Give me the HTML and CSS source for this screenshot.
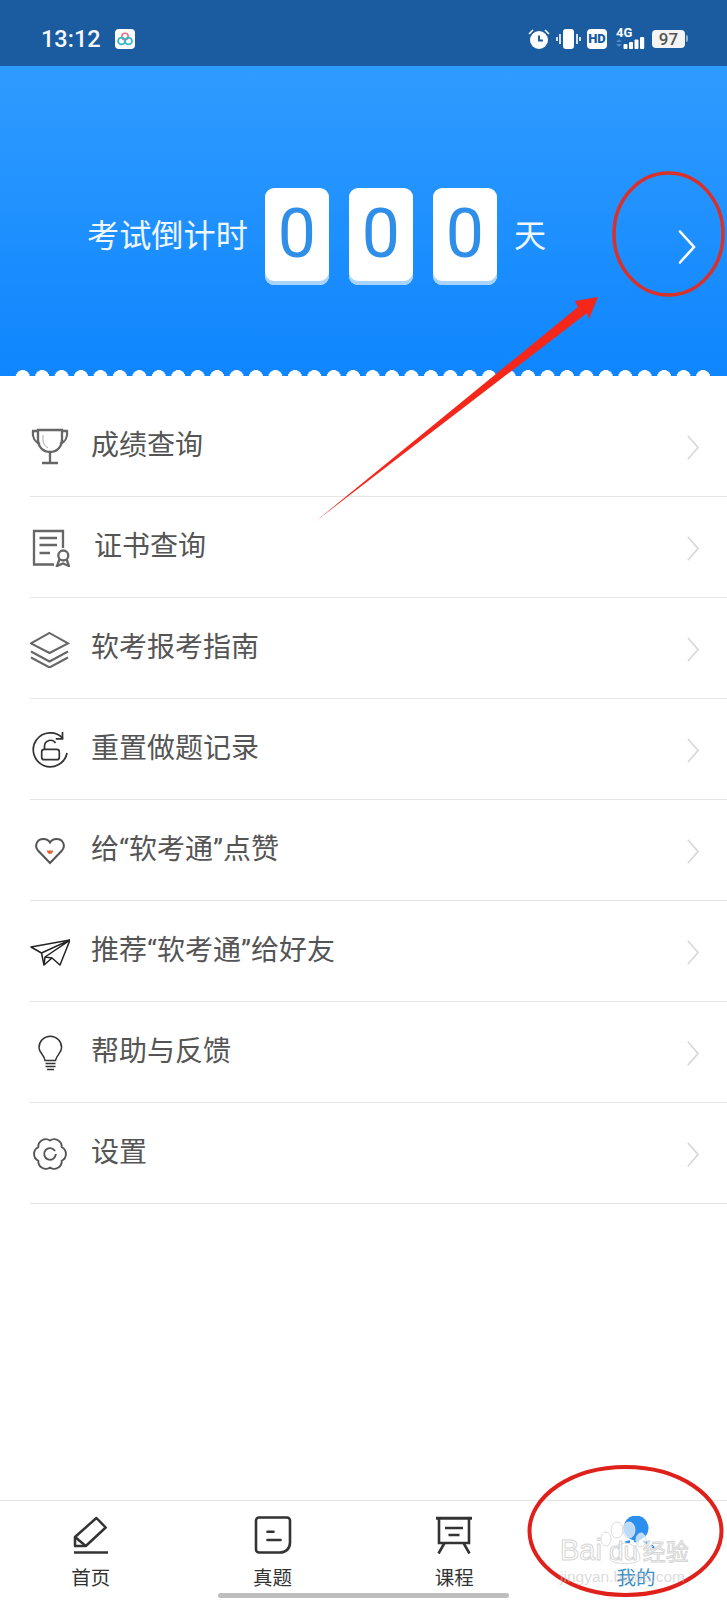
FILE: index.html
```html
<!DOCTYPE html>
<html lang="zh-CN">
<head>
<meta charset="utf-8">
<title>软考通</title>
<link rel="stylesheet" href="styles.css">
</head>
<body>
<div class="app">
  <header class="status">
    <span class="time">13:12</span>
    <svg class="app-badge" viewBox="0 0 20 20"><rect width="20" height="20" rx="4" fill="#fff"/><circle cx="10" cy="7.500" r="3.200" fill="none" stroke="#e8708a" stroke-width="1.600"/><circle cx="6.500" cy="12" r="3.400" fill="none" stroke="#35b6c8" stroke-width="1.800"/><circle cx="13.500" cy="12" r="3.400" fill="none" stroke="#35b6c8" stroke-width="1.800"/></svg>
    <div class="status-right">
      <svg class="ic-alarm" viewBox="0 0 22 20"><circle cx="11" cy="11" r="9" fill="#fff"/><path d="M11 6.500V11.500H15" fill="none" stroke="#1a5c9f" stroke-width="2"/><path d="M1 5 5 1M21 5 17 1" stroke="#fff" stroke-width="1.600" fill="none"/></svg>
      <svg class="ic-vib" viewBox="0 0 25 20"><rect x="7" y="0" width="11" height="20" rx="3" fill="#fff"/><path d="M4 5v10M1 8v4M21 5v10M24 8v4" stroke="#fff" stroke-width="1.600"/></svg>
      <span class="hd">HD</span>
      <div class="net">
        <span class="net-label">4G</span>
        <svg class="net-bars" viewBox="0 0 30 12"><path d="M0 5 3 2 6 5zM0 7 3 10 6 7z" fill="#4f86c4"/><rect x="7.500" y="7" width="4" height="5" rx="1" fill="#fff"/><rect x="13" y="5" width="4" height="7" rx="1" fill="#fff"/><rect x="18.500" y="2.500" width="4" height="9.500" rx="1" fill="#fff"/><rect x="24" y="0" width="4.200" height="12" rx="1" fill="#fff"/></svg>
      </div>
      <div class="battery"><span class="battery-body">97</span><span class="battery-nub"></span></div>
    </div>
  </header>

  <section class="hero">
    <div class="hero-row">
      <span class="hero-text">考试倒计时</span>
      <span class="digit">0</span>
      <span class="digit">0</span>
      <span class="digit">0</span>
      <span class="hero-text day">天</span>
      <svg class="hero-chevron" viewBox="0 0 18 34"><path d="M2 1.500 16 17 2 32.500" fill="none" stroke="#fff" stroke-width="2.600" stroke-linecap="round"/></svg>
    </div>
    <div class="scallops"></div>
  </section>

  <main class="list">
    <a class="row">
      <svg class="row-icon" viewBox="0 0 40 40"><g fill="none" stroke="#666" stroke-width="2.300"><path d="M8 4h24v9c0 8-5 13-12 13S8 21 8 13z"/><path d="M8 5H3c-1 6 2 11 7 13M32 5h5c1 6-2 11-7 13M20 26v11M12 37h16"/><path d="M13 9v5c0 4 2 6 5 8" stroke="#aaa" stroke-width="1"/></g></svg>
      <span class="row-label">成绩查询</span>
      <svg class="row-chevron" viewBox="0 0 12 25"><path d="M.8 .8 11 12.500.8 24.200" fill="none" stroke="#d8d8d8" stroke-width="1.700"/></svg>
    </a>
    <a class="row">
      <svg class="row-icon" viewBox="0 0 40 40"><g fill="none" stroke="#666" stroke-width="2.300"><path d="M33 21V4H4v33.500h20"/><path d="M9.500 11H27M9.500 18H27M9.500 26H20"/><circle cx="33.300" cy="28.500" r="5"/><path d="M29.500 32 27 39l6-2.500 6 2.500-2.500-7"/></g></svg>
      <span class="row-label row-label-shift">证书查询</span>
      <svg class="row-chevron" viewBox="0 0 12 25"><path d="M.8 .8 11 12.500.8 24.200" fill="none" stroke="#d8d8d8" stroke-width="1.700"/></svg>
    </a>
    <a class="row">
      <svg class="row-icon" viewBox="0 0 40 40"><g fill="none" stroke="#666" stroke-width="2"><path d="M19.500 5 38 15.300 19.500 25 1 15.300z"/><path d="M1 23.500l18.500 10 18.500-10M1 29.500l18.500 10 18.500-10"/></g></svg>
      <span class="row-label">软考报考指南</span>
      <svg class="row-chevron" viewBox="0 0 12 25"><path d="M.8 .8 11 12.500.8 24.200" fill="none" stroke="#d8d8d8" stroke-width="1.700"/></svg>
    </a>
    <a class="row">
      <svg class="row-icon" viewBox="0 0 40 40"><g fill="none" stroke="#333" stroke-width="1.700"><path d="M33 9.500A17 17 0 1 0 37 24"/><path d="M32.500 3v6.800h-6.800"/><rect x="11.700" y="20.300" width="17.600" height="10.400" rx="2.500"/><path d="M14.500 20v-3a6 6 0 0 1 11-3"/></g></svg>
      <span class="row-label">重置做题记录</span>
      <svg class="row-chevron" viewBox="0 0 12 25"><path d="M.8 .8 11 12.500.8 24.200" fill="none" stroke="#d8d8d8" stroke-width="1.700"/></svg>
    </a>
    <a class="row">
      <svg class="row-icon" viewBox="0 0 40 40"><path d="M20 33 8 20.500C4 15.500 7 9 13.500 9c3 0 5 1 6.500 3.500C21.500 10 23.500 9 26.500 9 33 9 36 15.500 32 20.500z" fill="none" stroke="#555" stroke-width="2"/><path d="M16.700 20.500h6.600c-.5 2.500-2 3.500-3.300 3.500s-2.800-1-3.300-3.500z" fill="#e8622a"/></svg>
      <span class="row-label">给“软考通”点赞</span>
      <svg class="row-chevron" viewBox="0 0 12 25"><path d="M.8 .8 11 12.500.8 24.200" fill="none" stroke="#d8d8d8" stroke-width="1.700"/></svg>
    </a>
    <a class="row">
      <svg class="row-icon" viewBox="0 0 40 40"><g fill="none" stroke="#222" stroke-width="1.500" stroke-linejoin="round"><path d="M40 9 1 16l10.500 6L14 34l8-7 8 7z"/><path d="M40 9 11.500 22M40 9 15 26l-1 8M15 26l7 1"/></g></svg>
      <span class="row-label">推荐“软考通”给好友</span>
      <svg class="row-chevron" viewBox="0 0 12 25"><path d="M.8 .8 11 12.500.8 24.200" fill="none" stroke="#d8d8d8" stroke-width="1.700"/></svg>
    </a>
    <a class="row">
      <svg class="row-icon" viewBox="0 0 40 40"><g fill="none" stroke="#333" stroke-width="1.500"><path d="M15 28.500C14 22 9 21 9 15.500a11.300 11.300 0 0 1 22.600 0C31.600 21 27 22 25.500 28.500z"/><path d="M15.500 31.500h10M15.500 34.500h10M17 37.500h7"/></g></svg>
      <span class="row-label">帮助与反馈</span>
      <svg class="row-chevron" viewBox="0 0 12 25"><path d="M.8 .8 11 12.500.8 24.200" fill="none" stroke="#d8d8d8" stroke-width="1.700"/></svg>
    </a>
    <a class="row">
      <svg class="row-icon" viewBox="0 0 40 40"><g fill="none" stroke="#555" stroke-width="1.900" stroke-linejoin="round"><path d="M20 7.500A7.500 7.500 0 0 1 31.700 14.250A7.500 7.500 0 0 1 31.700 27.750A7.500 7.500 0 0 1 20 34.500A7.500 7.500 0 0 1 8.300 27.750A7.500 7.500 0 0 1 8.300 14.250A7.500 7.500 0 0 1 20 7.500Z"/><path d="M25 18a5.800 5.800 0 1 0 .8 3"/></g></svg>
      <span class="row-label">设置</span>
      <svg class="row-chevron" viewBox="0 0 12 25"><path d="M.8 .8 11 12.500.8 24.200" fill="none" stroke="#d8d8d8" stroke-width="1.700"/></svg>
    </a>
  </main>

  <nav class="tabs">
    <a class="tab">
      <svg class="tab-icon" viewBox="0 0 40 40"><g fill="none" stroke="#333" stroke-width="2.500" stroke-linejoin="round"><path d="M4 21 25.400 2l9.300 9.500L14.800 30H4z"/><path d="M4 21l10.800 9"/><path d="M3 36.500h34"/></g></svg>
      <span class="tab-label">首页</span>
    </a>
    <a class="tab">
      <svg class="tab-icon" viewBox="0 0 40 40"><g fill="none" stroke="#333" stroke-width="2.600" stroke-linecap="round"><path d="M6 1.500h28a3 3 0 0 1 3 3v22c0 6-4 10-10 10H6a3 3 0 0 1-3-3v-29a3 3 0 0 1 3-3z"/><path d="M14.500 15.700h6M14.500 24h13"/></g></svg>
      <span class="tab-label">真题</span>
    </a>
    <a class="tab">
      <svg class="tab-icon" viewBox="0 0 40 40"><g fill="none" stroke="#333" stroke-width="2.600"><path d="M2 2.300h36" stroke-width="3"/><path d="M5 3v24h30V3"/><path d="M10.500 27 4.500 37.500M29.500 27l6 10.500"/><path d="M11 12h18M14.500 19h11"/></g></svg>
      <span class="tab-label">课程</span>
    </a>
    <a class="tab tab-active">
      <svg class="tab-icon" viewBox="0 0 40 40"><circle cx="20" cy="12" r="12.500" fill="#2b8ff0"/><path d="M2 32c4-5 10-7 18-7s14 2 18 7" fill="none" stroke="#2b8ff0" stroke-width="2.400" stroke-dasharray="5 4"/></svg>
      <span class="tab-label">我的</span>
    </a>
    <span class="home-bar"></span>
  </nav>

  <svg class="annot" viewBox="0 0 727 1600">
    <ellipse cx="668.500" cy="234" rx="54.500" ry="61" fill="none" stroke="#d9302a" stroke-width="3.500"/>
    <polygon points="316,521 578,307 575,301 598,297 589,319 587,313" fill="#f5261a"/>
    <ellipse cx="625.500" cy="1531" rx="96" ry="64" fill="none" stroke="#e0201a" stroke-width="4"/>
    <g fill="#fff" fill-opacity=".68" stroke="#dcdcdc" stroke-width="1">
      <ellipse cx="617" cy="1530" rx="6" ry="8"/>
      <ellipse cx="606" cy="1539" rx="5" ry="7"/>
      <ellipse cx="629" cy="1530" rx="6" ry="8"/>
      <ellipse cx="641" cy="1540" rx="5" ry="7"/>
      <path d="M610 1559c0-11 9-16 15-16s15 5 15 16c0 6-30 6-30 0z"/>
    </g>
  </svg>
  <div class="watermark">
    <div class="wm-brand"><span class="wm-bai">Bai</span><span class="wm-du">du</span><span class="wm-jy">经验</span></div>
    <div class="wm-url">jingyan.baidu.com</div>
  </div>
</div>
</body>
</html>
```

FILE: styles.css
```css
* { box-sizing: border-box; }
html, body { margin: 0; padding: 0; background: #fff; }
body { font-family: Roboto, "Noto Sans CJK SC", sans-serif; }
.app { position: relative; width: 727px; height: 1600px; display: flex; flex-direction: column; overflow: hidden; }

.status { height: 66px; flex: none; display: flex; align-items: center; padding: 11px 39px 0 41px; background: #1a5c9f; color: #fff; }
.time { font-size: 23.5px; line-height: 28px; font-weight: 500; color: #f4f8fc; }
.app-badge { width: 20px; height: 20px; margin-left: 14px; }
.status-right { margin-left: auto; display: flex; align-items: center; }
.ic-alarm { width: 22px; height: 20px; }
.ic-vib { width: 25px; height: 20px; margin-left: 6px; }
.hd { width: 20px; height: 20px; margin-left: 6px; border-radius: 4px; background: #fff; color: #1a5c9f; font-size: 13px; line-height: 20px; font-weight: 900; text-align: center; }
.net { position: relative; width: 29px; height: 21px; margin-left: 9px; }
.net-label { position: absolute; left: 0; top: -2px; font-size: 13px; line-height: 13px; font-weight: 700; color: #fff; }
.net-bars { position: absolute; left: 0; bottom: 0; width: 30px; height: 12px; }
.battery { display: flex; align-items: center; margin-left: 7px; }
.battery-body { width: 33px; height: 18px; border-radius: 4px; background: #f4f4f4; color: #555; font-size: 17px; line-height: 18px; font-weight: 500; text-align: center; }
.battery-nub { width: 2px; height: 7px; margin-left: 1px; border-radius: 0 2px 2px 0; background: #8fb2d6; }

.hero { height: 310px; flex: none; display: flex; flex-direction: column; justify-content: space-between; padding-top: 122px; background: linear-gradient(#2f9bff, #0f86fe); }
.hero-row { display: flex; align-items: center; height: 97px; padding-left: 87px; }
.hero-text { font-size: 32.2px; line-height: 40px; color: #eef6ff; margin-top: -2px; }
.digit { width: 64px; height: 97px; border-radius: 9px; background: #fff; box-shadow: inset 0 -4px 0 #a9d3fb; color: #2f8fe8; font-size: 68px; line-height: 92px; font-weight: 400; text-align: center; }
.hero-text + .digit { margin-left: 17px; }
.digit + .digit { margin-left: 20px; }
.day { margin-left: 17px; }
.hero-chevron { width: 18px; height: 34px; margin-left: 132px; margin-top: 20px; }
.scallops { height: 6px; margin: 0 14px 0 13px; background: radial-gradient(ellipse 6.8px 6px at 50% 100%, #fff 96%, rgba(255,255,255,0) 100%) repeat-x; background-size: 19.45px 6px; }

.list { flex: 1; padding-top: 20px; }
.row { display: flex; align-items: center; height: 101px; margin-left: 30px; padding-right: 28px; border-bottom: 1px solid #e4e4e4; }
.row-icon { width: 40px; height: 40px; flex: none; }
.row-label { margin-left: 21px; font-size: 28px; line-height: 36px; color: #555; }
.row-label-shift { margin-left: 24px; }
.row-chevron { width: 12px; height: 25px; margin-left: auto; margin-top: 3px; }

.tabs { position: relative; height: 100px; flex: none; display: grid; grid-template-columns: repeat(4, 1fr); padding-top: 15px; border-top: 1px solid #e5e5e5; }
.tab { display: flex; flex-direction: column; align-items: center; }
.tab-icon { width: 40px; height: 40px; }
.tab-label { margin-top: 12px; font-size: 19.5px; line-height: 21px; color: #333; }
.tab-active .tab-label { color: #3a8fc8; }
.home-bar { position: absolute; left: 218px; bottom: 2px; width: 291px; height: 5px; border-radius: 3px; background: #bdbdbd; }

.annot { position: absolute; inset: 0; width: 727px; height: 1600px; pointer-events: none; }
.watermark { position: absolute; left: 560px; top: 1536px; width: 130px; pointer-events: none; color: rgba(255,255,255,.8); font-family: "Liberation Sans", "Noto Sans CJK SC", sans-serif; }
.wm-brand { display: flex; align-items: baseline; height: 28px; font-size: 29px; line-height: 28px; -webkit-text-stroke: 1px #d6d6d6; }
.wm-du { margin-left: 7px; font-size: 26px; }
.wm-jy { margin-left: 5px; font-size: 23px; }
.wm-url { margin-top: 4px; font-size: 15.5px; line-height: 18px; color: rgba(190,190,190,.55); white-space: nowrap; }
```
